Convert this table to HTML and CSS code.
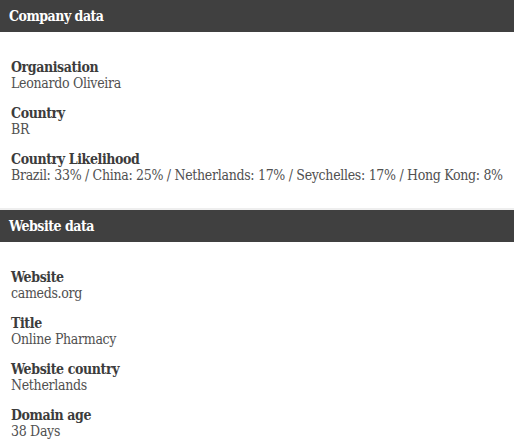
FILE: index.html
```html
<!DOCTYPE html>
<html>
<head>
<meta charset="utf-8">
<link rel="stylesheet" href="styles.css">
</head>
<body>
<section class="panel">
  <h2 class="panel-head">Company data</h2>
  <div class="panel-body">
    <div class="field"><div class="label">Organisation</div><div class="value">Leonardo Oliveira</div></div>
    <div class="field"><div class="label">Country</div><div class="value">BR</div></div>
    <div class="field"><div class="label">Country Likelihood</div><div class="value">Brazil: 33% / China: 25% / Netherlands: 17% / Seychelles: 17% / Hong Kong: 8%</div></div>
  </div>
</section>
<div class="sep"></div>
<section class="panel">
  <h2 class="panel-head">Website data</h2>
  <div class="panel-body">
    <div class="field"><div class="label">Website</div><div class="value">cameds.org</div></div>
    <div class="field"><div class="label">Title</div><div class="value">Online Pharmacy</div></div>
    <div class="field"><div class="label">Website country</div><div class="value">Netherlands</div></div>
    <div class="field"><div class="label">Domain age</div><div class="value">38 Days</div></div>
  </div>
</section>
</body>
</html>
```
FILE: styles.css
```css
html, body {
  margin: 0;
  padding: 0;
  background: #ffffff;
}
body {
  font-family: "DejaVu Serif Condensed", "DejaVu Serif", serif;
  color: #444444;
  font-size: 14px;
  line-height: 16px;
  width: 514px;
}
.panel-head {
  margin: 0;
  background: #404040;
  color: #ffffff;
  font-size: 14px;
  font-weight: bold;
  letter-spacing: -0.5px;
  height: 32px;
  line-height: 32px;
  padding: 0 9px;
}
.panel-body {
  display: flex;
  flex-direction: column;
  gap: 14px;
  padding: 27px 11px 25px;
}
.label {
  font-weight: bold;
  color: #3c3c3c;
  letter-spacing: -0.4px;
}
.value {
  color: #505050;
  white-space: nowrap;
  letter-spacing: -0.31px;
}
.sep {
  height: 2px;
  background: #eeeeee;
}
```
